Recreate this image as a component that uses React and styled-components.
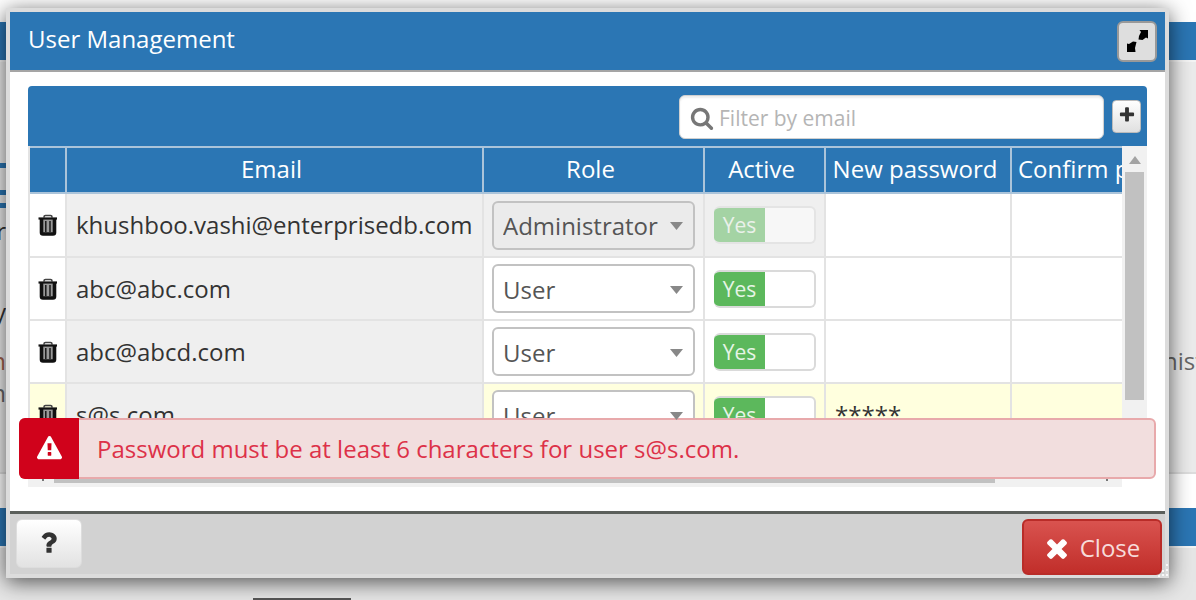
import React, { useState } from "react";
import styled, { createGlobalStyle } from "styled-components";

const blue = "#2b76b4";
const line = "#e3e3e3";
const headLine = "#abc4da";

const GlobalStyle = createGlobalStyle`
  * { box-sizing: border-box; }
  body {
    margin: 0;
    background: #fff;
    color: #333;
    font-family: "Open Sans", "Noto Sans", sans-serif;
    font-size: 24px;
    line-height: 32px;
  }
  button, input, select { font: inherit; color: inherit; margin: 0; }
`;

/* page behind the dialog */
const Backdrop = styled.div`
  height: 100vh;
  overflow: hidden;
  display: flex;
  flex-direction: column;
  padding-top: 22px;
`;
const Bar = styled.div`
  height: 40px;
  flex: none;
  background: ${blue};
  border-bottom: 2px solid #f4f4f4;
`;
const Panel = styled.div`
  height: 412px;
  flex: none;
  display: flex;
  justify-content: space-between;
  background: #ebebeb;
  border-bottom: 2px solid #ddd;
`;
const Gap = styled.div`
  height: 34px;
  flex: none;
`;
const Lower = styled.div`
  flex: 1;
  display: flex;
  align-items: flex-end;
  background: #e6e6e6;
`;
const Handle = styled.div`
  width: 98px;
  height: 2px;
  margin-left: 253px;
  background: #555;
`;
const LeftStrip = styled.div`
  width: 6px;
  padding-top: 101px;
  display: flex;
  flex-direction: column;
  align-items: flex-end;
`;
const Stroke = styled.i`
  width: 6px;
  height: 5px;
  margin-bottom: ${(p) => p.$after}px;
  background: ${blue};
`;
const Letter = styled.span`
  margin-bottom: ${(p) => p.$after || 0}px;
  color: ${(p) => p.$color || "#333"};
`;
const RightStrip = styled.div`
  width: 33px;
  padding-top: 283px;
  color: #666;
`;

const Dialog = styled.section`
  position: absolute;
  top: 8px;
  left: 6px;
  right: 27px;
  border: 4px solid #dcdcdc;
  background: #fff;
  box-shadow: 0 4px 20px rgba(0, 0, 0, 0.65);
`;
const TitleBar = styled.header`
  display: flex;
  align-items: center;
  justify-content: space-between;
  height: 60px;
  padding: 0 8px 0 18px;
  background: ${blue};
  border-bottom: 2px solid #a5a5a5;
  color: #fff;
`;
const Title = styled.h1`
  margin: 0 0 4px;
  font-size: 24px;
  font-weight: 400;
`;
const ExpandButton = styled.button`
  display: grid;
  place-items: center;
  width: 40px;
  height: 41px;
  padding: 0;
  border: 2px solid #999;
  border-radius: 6px;
  background: #dedede;
  color: #000;
`;
const Body = styled.div`
  padding: 14px 18px 24px;
`;
const Toolbar = styled.div`
  display: flex;
  align-items: center;
  justify-content: flex-end;
  gap: 8px;
  height: 60px;
  padding: 2px 6px 0 0;
  border-radius: 4px 4px 0 0;
  background: ${blue};
`;
const Search = styled.label`
  display: flex;
  align-items: center;
  gap: 5px;
  width: 425px;
  height: 44px;
  padding: 2px 10px 0;
  border: 1px solid #d0d0d0;
  border-radius: 6px;
  background: #fff;
  box-shadow: inset 0 2px 2px #eee;
  color: #777;
`;
const SearchInput = styled.input`
  flex: 1;
  min-width: 0;
  height: 32px;
  padding: 0;
  border: 0;
  outline: 0;
  background: none;
  font-size: 21px;
  &::placeholder { color: #b5b5b5; opacity: 1; }
`;
const AddButton = styled.button`
  display: grid;
  place-items: center;
  width: 29px;
  height: 33px;
  margin-bottom: 2px;
  padding: 0 0 2px;
  border: 1px solid #bbb;
  border-radius: 4px;
  background: linear-gradient(#fff, #e0e0e0);
  color: #333;
`;
const Grid = styled.div`
  display: flex;
  height: 332px;
  overflow: hidden;
`;
const Scroller = styled.div`
  flex: 1;
  min-width: 0;
  overflow: hidden;
`;
const UserTable = styled.table`
  width: 1204px;
  table-layout: fixed;
  border-collapse: separate;
  border-spacing: 0;
  border-left: 2px solid ${line};
`;
const HeadCell = styled.th`
  width: ${(p) => p.$w}px;
  height: 48px;
  padding: 0 8px 2px ${(p) => (p.$align ? 6 : 2)}px;
  background: ${blue};
  border: solid ${headLine};
  border-width: 2px 2px 2px 0;
  color: #fff;
  font-weight: 400;
  text-align: ${(p) => p.$align || "center"};
  white-space: nowrap;
`;
const Cell = styled.td`
  height: ${(p) => (p.$tall ? 64 : 63)}px;
  padding: ${(p) => p.$pad || "0 9px"};
  border: solid ${line};
  border-width: 0 2px 2px 0;
  background: ${(p) => (p.$tone === "locked" ? "#efefef" : p.$tone === "invalid" ? "#ffffde" : "#fff")};
`;
const IconButton = styled.button`
  display: grid;
  place-items: center;
  width: 100%;
  height: 32px;
  padding: 0;
  border: 0;
  background: none;
  color: #111;
`;
const SelectWrap = styled.span`
  display: grid;
  align-items: center;
  justify-items: end;
  height: 50px;
  svg { grid-area: 1 / 1; margin: 2px 12px 0 0; pointer-events: none; z-index: 1; }
`;
const Select = styled.select`
  grid-area: 1 / 1;
  width: 100%;
  height: 49px;
  padding: 2px 9px 0;
  appearance: none;
  border: 2px solid #c2c2c2;
  border-radius: 6px;
  background: #fff;
  color: #555;
  opacity: 1;
  &:disabled { background: #ebebeb; color: #555; }
`;
const Switch = styled.label`
  display: grid;
  grid-template-columns: 51px 1fr;
  width: 102px;
  height: 38px;
  border: 2px solid #dadada;
  border-left: 0;
  border-radius: 6px;
  overflow: hidden;
  background: #fff;
  font-size: 21px;
  line-height: 34px;
  opacity: ${(p) => (p.$disabled ? 0.5 : 1)};
`;
const SwitchText = styled.span`
  grid-area: 1 / 1;
  background: #5cb85c;
  color: #e6f4e6;
  text-align: center;
`;
const SwitchInput = styled.input`
  grid-area: 1 / 1;
  appearance: none;
  z-index: 1;
`;
const VScroll = styled.div`
  display: flex;
  flex-direction: column;
  align-items: center;
  gap: 8px;
  width: 25px;
  padding-top: 10px;
  background: #f1f1f1;
`;
const VThumb = styled.div`
  width: 19px;
  height: 228px;
  background: #c1c1c1;
`;
const HScroll = styled.div`
  display: flex;
  height: 9px;
  margin-right: 25px;
  background: #f1f1f1;
`;
const HThumb = styled.div`
  flex: 1;
  height: 5px;
  background: #c1c1c1;
`;
const ArrowTip = styled.i`
  width: 2px;
  height: 3px;
  margin: 0 ${(p) => p.$right}px 0 ${(p) => p.$left}px;
  background: #777;
`;
const Alert = styled.div`
  position: absolute;
  left: 9px;
  right: 9px;
  bottom: 95px;
  display: flex;
  height: 61px;
  border: 2px solid #e8a9ab;
  border-radius: 6px;
  background: #f2dede;
  color: #dd3148;
  line-height: 58px;
`;
const AlertIcon = styled.span`
  display: grid;
  place-items: center;
  width: 60px;
  margin: -2px 0 -2px -2px;
  border-radius: 6px 0 0 6px;
  background: #d0021b;
  color: #fff;
`;
const AlertText = styled.p`
  margin: 0;
  padding-left: 18px;
  white-space: nowrap;
`;
const Footer = styled.footer`
  display: flex;
  align-items: flex-start;
  justify-content: space-between;
  height: 63px;
  padding: 5px 3px 0 6px;
  border-top: 3px solid #5b5f5b;
  background: #d2d2d2;
`;
const FooterButton = styled.button`
  display: flex;
  align-items: center;
  justify-content: center;
  gap: 8px;
  width: ${(p) => (p.$danger ? 140 : 66)}px;
  height: ${(p) => (p.$danger ? 56 : 49)}px;
  padding: ${(p) => (p.$danger ? "2px 2px 0 0" : "0 2px 2px 0")};
  border: ${(p) => (p.$danger ? "2px solid #b92c28" : "1px solid #ddd")};
  border-radius: 6px;
  background: ${(p) => (p.$danger ? "linear-gradient(#d9534f, #c12e2a)" : "linear-gradient(#fff, #e2e2e2)")};
  color: ${(p) => (p.$danger ? "#f7dcdb" : "#333")};
  svg { color: ${(p) => (p.$danger ? "#fff" : "#333")}; }
`;
const Grip = styled.svg`
  position: absolute;
  right: -4px;
  bottom: -4px;
`;

const paths = {
  search: "M1216 832q0-185-131.5-316.5t-316.5-131.5-316.5 131.5-131.5 316.5 131.5 316.5 316.5 131.5 316.5-131.5 131.5-316.5zm512 832q0 52-38 90t-90 38q-54 0-90-38l-343-342q-179 124-399 124-143 0-273.5-55.5t-225-150-150-225-55.5-273.5 55.5-273.5 150-225 225-150 273.5-55.5 273.5 55.5 225 150 150 225 55.5 273.5q0 220-124 399l343 343q37 37 37 90z",
  plus: "M1600 736v192q0 40-28 68t-68 28h-416v416q0 40-28 68t-68 28h-192q-40 0-68-28t-28-68v-416h-416q-40 0-68-28t-28-68v-192q0-40 28-68t68-28h416v-416q0-40 28-68t68-28h192q40 0 68 28t28 68v416h416q40 0 68 28t28 68z",
  times: "M1490 1322q0 40-28 68l-136 136q-28 28-68 28t-68-28l-294-294-294 294q-28 28-68 28t-68-28l-136-136q-28-28-28-68t28-68l294-294-294-294q-28-28-28-68t28-68l136-136q28-28 68-28t68 28l294 294 294-294q28-28 68-28t68 28l136 136q28 28 28 68t-28 68l-294 294 294 294q28 28 28 68z",
  question: "M1088 1256v240q0 16-12 28t-28 12h-240q-16 0-28-12t-12-28v-240q0-16 12-28t28-12h240q16 0 28 12t12 28zm316-600q0 54-15.5 101t-35 76.5-55 59.5-57.5 43.5-61 35.5q-41 23-68.5 65t-27.5 67q0 17-12 32.5t-28 15.5h-240q-15 0-25.5-18.5t-10.5-37.5v-45q0-83 65-156.5t143-108.5q59-27 84-56t25-76q0-42-46.5-74t-107.5-32q-65 0-108 29-35 25-107 115-13 16-31 16-12 0-25-8l-164-125q-13-10-15.5-25t5.5-28q160-266 464-266 80 0 161 31t146 83 106 127.5 41 158.5z",
  warning: "M1024 1375v-190q0-14-9.5-23.5t-22.5-9.5h-192q-13 0-22.5 9.5t-9.5 23.5v190q0 14 9.5 23.5t22.5 9.5h192q13 0 22.5-9.5t9.5-23.5zm-2-374l18-459q0-12-10-19-13-11-24-11h-220q-11 0-24 11-10 7-10 21l17 457q0 10 10 16.5t24 6.5h185q14 0 23.5-6.5t10.5-16.5zm-14-934l768 1408q35 63-2 126-17 29-46.5 46t-63.5 17h-1536q-34 0-63.5-17t-46.5-46q-37-63-2-126l768-1408q17-31 47-49t65-18 65 18 47 49z",
};

const Icon = ({ name, size }) => (
  <svg width={size} height={size} viewBox="0 0 1792 1792" fill="currentColor" aria-hidden="true">
    <path d={paths[name]} />
  </svg>
);

const TrashIcon = () => (
  <svg width="20" height="22" viewBox="0 0 20 22" fill="none" stroke="currentColor" aria-hidden="true">
    <path d="M3 5h14v15H3z" fill="#999" stroke="none" />
    <path d="M0.5 4.5h18.5" strokeWidth="2.2" />
    <path d="M6 4V3q0-1.500 1.500-1.500h5q1.500 0 1.500 1.500v1" strokeWidth="1.6" stroke="#444" />
    <path d="M3.500 5v13.500q0 1.500 1.500 1.500h10q1.500 0 1.500-1.500V5" strokeWidth="3.600" />
    <path d="M7.800 7v11M12 7v11" strokeWidth="1.400" />
  </svg>
);

const ExpandIcon = () => (
  <svg width="21" height="22" viewBox="0 0 21 22" fill="currentColor" aria-hidden="true">
    <path d="M12.500 0H21v8.500l-2-1-3.500 2.500-4-.5.5-3.500 2-4z" />
    <path d="M8.500 22H0v-8.500l2 .5 4-2.500 3.500.5-1 4-.500 2z" />
  </svg>
);

const Caret = () => (
  <svg width="13" height="8" viewBox="0 0 13 8" fill="#888" aria-hidden="true">
    <path d="M0 0h13L6.500 8z" />
  </svg>
);

const users = [
  { email: "khushboo.vashi@enterprisedb.com", role: "Administrator", locked: true },
  { email: "abc@abc.com", role: "User" },
  { email: "abc@abcd.com", role: "User" },
  { email: "s@s.com", role: "User", password: "*****", invalid: true },
];

function UserRow({ user }) {
  const [active, setActive] = useState(true);
  const tone = user.invalid ? "invalid" : "plain";
  const fixedTone = user.locked ? "locked" : tone;
  return (
    <tr>
      <Cell $tone={tone} $pad="0" $tall={user.locked}>
        <IconButton aria-label={`Delete ${user.email}`}><TrashIcon /></IconButton>
      </Cell>
      <Cell $tone="locked">{user.email}</Cell>
      <Cell $tone={fixedTone} $pad="0 8px">
        <SelectWrap>
          <Select aria-label={`Role of ${user.email}`} defaultValue={user.role} disabled={user.locked}>
            <option>Administrator</option>
            <option>User</option>
          </Select>
          <Caret />
        </SelectWrap>
      </Cell>
      <Cell $tone={fixedTone}>
        <Switch $disabled={user.locked}>
          <SwitchText>{active ? "Yes" : "No"}</SwitchText>
          <SwitchInput
            type="checkbox"
            checked={active}
            disabled={user.locked}
            onChange={(e) => setActive(e.target.checked)}
          />
        </Switch>
      </Cell>
      <Cell $tone={tone}>{user.password}</Cell>
      <Cell $tone={tone} />
    </tr>
  );
}

export default function App() {
  return (
    <>
      <GlobalStyle />
      <Backdrop>
        <Bar />
        <Panel>
          <LeftStrip aria-hidden="true">
            <Stroke $after={22} />
            <Stroke $after={8} />
            <Stroke $after={7} />
            <Letter $after={49}>r</Letter>
            <Letter $after={17}>y</Letter>
            <Letter $color="#a0604a">n</Letter>
            <Letter $color="#666">n</Letter>
          </LeftStrip>
          <RightStrip aria-hidden="true">nist</RightStrip>
        </Panel>
        <Gap />
        <Bar />
        <Lower><Handle /></Lower>
      </Backdrop>

      <Dialog role="dialog" aria-label="User Management">
        <TitleBar>
          <Title>User Management</Title>
          <ExpandButton aria-label="Maximize"><ExpandIcon /></ExpandButton>
        </TitleBar>
        <Body>
          <Toolbar>
            <Search>
              <Icon name="search" size={24} />
              <SearchInput type="text" placeholder="Filter by email" aria-label="Filter by email" />
            </Search>
            <AddButton aria-label="Add user"><Icon name="plus" size={18} /></AddButton>
          </Toolbar>
          <Grid>
            <Scroller>
              <UserTable>
                <thead>
                  <tr>
                    <HeadCell $w={37} aria-label="Delete" />
                    <HeadCell $w={417}>Email</HeadCell>
                    <HeadCell $w={221}>Role</HeadCell>
                    <HeadCell $w={121}>Active</HeadCell>
                    <HeadCell $w={186}>New password</HeadCell>
                    <HeadCell $w={220} $align="left">Confirm password</HeadCell>
                  </tr>
                </thead>
                <tbody>
                  {users.map((user) => <UserRow key={user.email} user={user} />)}
                </tbody>
              </UserTable>
            </Scroller>
            <VScroll>
              <svg width="12" height="8" viewBox="0 0 12 8" fill="#a3a3a3" aria-hidden="true">
                <path d="M0 8h12L6 0z" />
              </svg>
              <VThumb />
            </VScroll>
          </Grid>
          <HScroll>
            <ArrowTip $left={14} $right={10} />
            <HThumb />
            <ArrowTip $left={111} $right={14} />
          </HScroll>
        </Body>
        <Footer>
          <FooterButton aria-label="Help"><Icon name="question" size={29} /></FooterButton>
          <FooterButton $danger><Icon name="times" size={30} />Close</FooterButton>
        </Footer>
        <Grip width="12" height="14" viewBox="0 0 12 14" fill="#f8f8f8" aria-hidden="true">
          <path d="M9 0h2v2H9zM9 5h2v2H9zM5 6h2v2H5zM9 10h2v2H9zM5 10h2v2H5zM1 11h2v2H1z" />
        </Grip>
        <Alert role="alert">
          <AlertIcon><Icon name="warning" size={25} /></AlertIcon>
          <AlertText>Password must be at least 6 characters for user s@s.com.</AlertText>
        </Alert>
      </Dialog>
    </>
  );
}
